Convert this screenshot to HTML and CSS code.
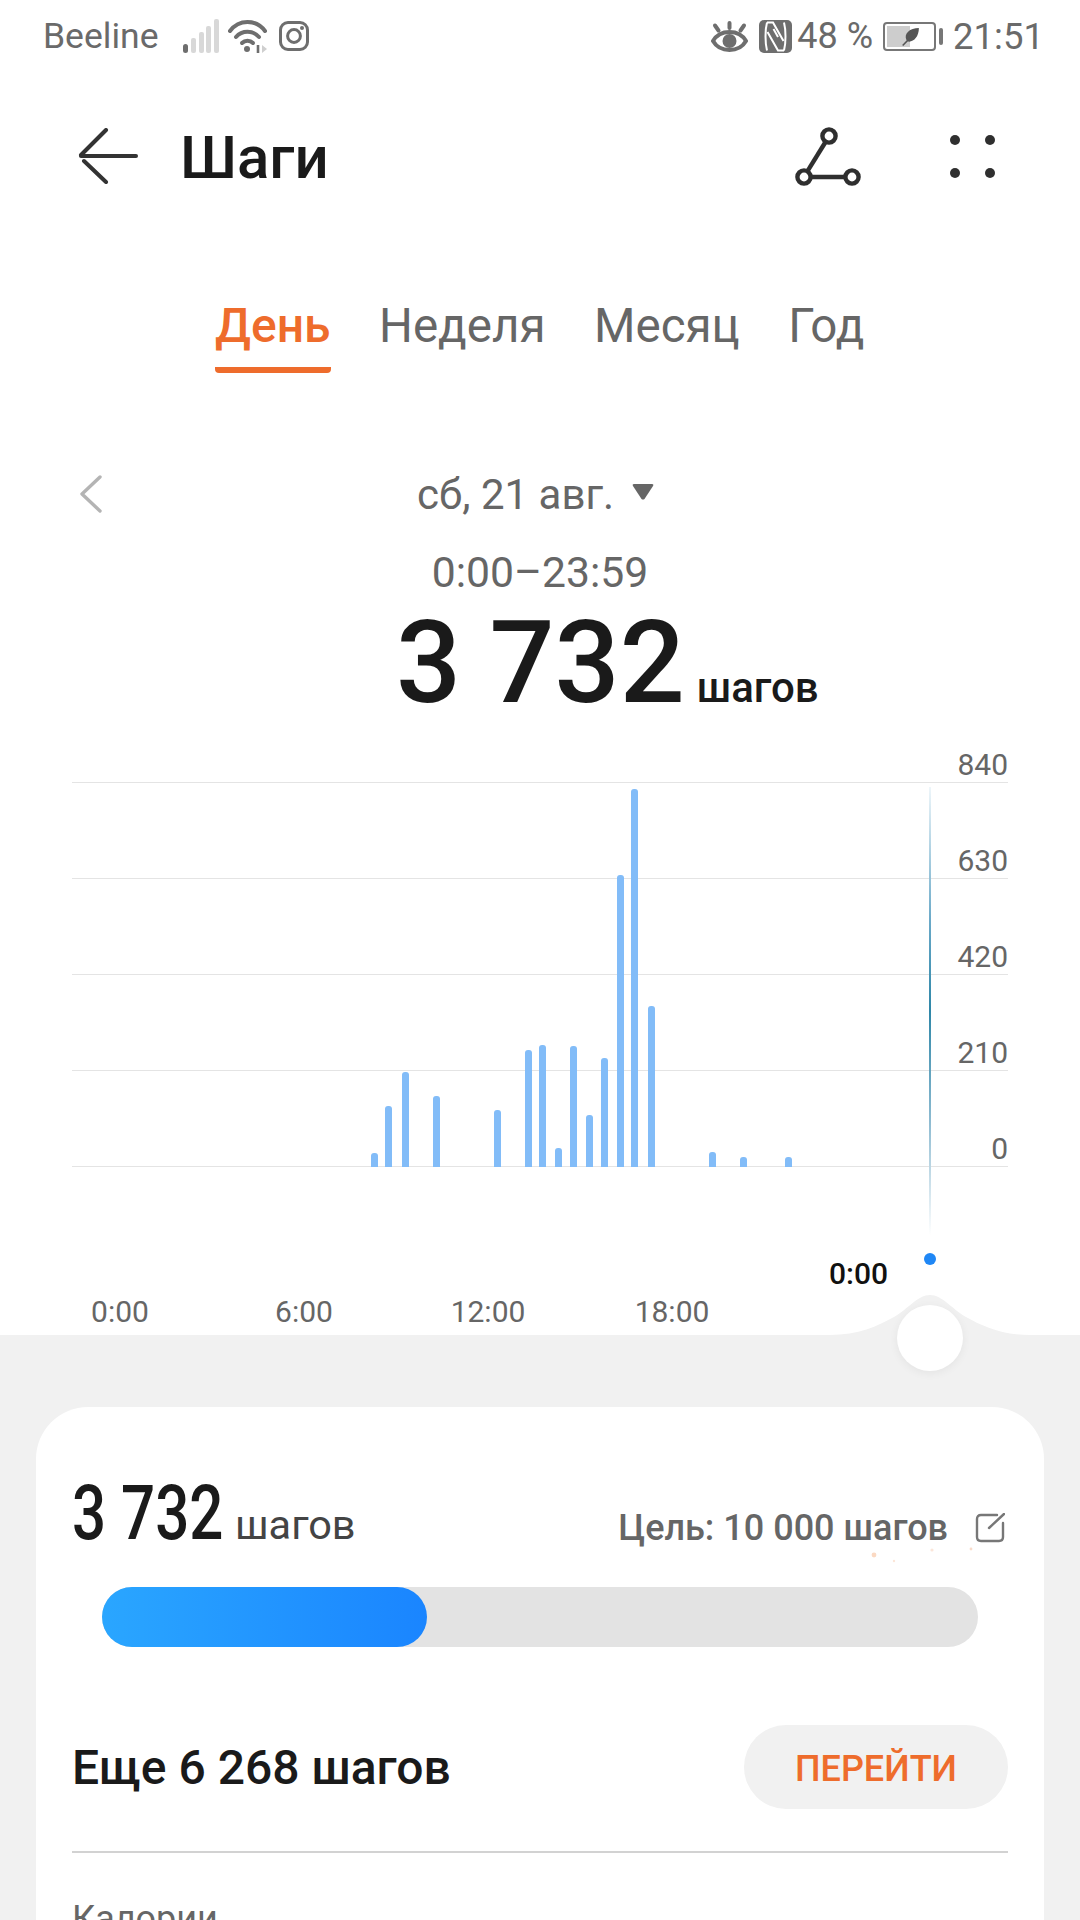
FILE: index.html
```html
<!DOCTYPE html>
<html lang="ru">
<head>
    <meta charset="UTF-8">
    <meta name="viewport" content="width=device-width, initial-scale=1.0">
    <title>Шаги</title>
    <link rel="stylesheet" href="styles.css">
</head>
<body>
    <div class="screen">
        <div class="status-bar">
            <div class="status-left">
                <span class="carrier">Beeline</span>
                <svg class="signal" width="36" height="34" viewBox="0 0 36 34">
                    <rect x="0" y="25" width="5" height="9" rx="2.5" fill="#6e6e6e"/>
                    <rect x="8" y="19" width="5" height="15" rx="2" fill="#d8d8d8"/>
                    <rect x="16" y="13" width="5" height="21" rx="2" fill="#d8d8d8"/>
                    <rect x="23" y="7" width="5" height="27" rx="2" fill="#d8d8d8"/>
                    <rect x="31" y="0" width="5" height="34" rx="2" fill="#d8d8d8"/>
                </svg>
                <svg class="wifi" width="39" height="34" viewBox="0 0 39 34" fill="none" stroke="#6e6e6e" stroke-width="4" stroke-linecap="round">
                    <path d="M2 12 C 11 0, 28 0, 37 12"/>
                    <path d="M8 18 C 14 11, 25 11, 31 18"/>
                    <path d="M14 24 C 17 21, 22 21, 25 24"/>
                    <circle cx="19" cy="30" r="3" fill="#6e6e6e" stroke="none"/>
                    <path d="M30 26 V34" stroke-width="2.6" stroke-linecap="butt"/>
                    <path d="M34 26 L39 30 L34 34 Z" fill="#cfcfcf" stroke="none"/>
                </svg>
                <svg class="insta" width="30" height="30" viewBox="0 0 30 30" fill="none" stroke="#6e6e6e" stroke-width="3">
                    <rect x="1.5" y="1.5" width="27" height="27" rx="7.5"/>
                    <circle cx="15" cy="15" r="6.4"/>
                    <circle cx="23" cy="7" r="2" fill="#6e6e6e" stroke="none"/>
                </svg>
            </div>
            <div class="status-right">
                <svg class="eye" width="37" height="31" viewBox="0 0 37 31" fill="none" stroke="#6e6e6e" stroke-width="4" stroke-linecap="round">
                    <path d="M2 20 C 9 8, 28 8, 35 20 C 28 32, 9 32, 2 20 Z"/>
                    <circle cx="18.5" cy="20" r="7" fill="#6e6e6e" stroke="none"/>
                    <path d="M18.5 2 V7 M4 4.5 L7.5 9.5 M33 4.5 L29.5 9.5"/>
                </svg>
                <svg class="nfc" width="33" height="33" viewBox="0 0 33 33" fill="none" stroke="#fff" stroke-width="2">
                    <rect width="33" height="33" rx="5" fill="#6e6e6e" stroke="none"/>
                    <path d="M8 2.5 C 6 10 6 23 8 30.5"/>
                    <path d="M25 2.5 C 27 10 27 23 25 30.5"/>
                    <path d="M8 2.5 H14 L24.5 21"/>
                    <path d="M25 30.5 H19 L8.5 12"/>
                    <path d="M14.5 9 L19 17"/>
                </svg>
                <span class="status-text percent">48 %</span>
                <div class="battery">
                    <div class="battery-body">
                        <div class="battery-fill"></div>
                        <svg class="leaf" width="19" height="19" viewBox="0 0 17 17">
                            <path d="M1 16 C 3 14 4 13 5 12 C 2 6 8 1 16 1 C 16 9 11 14 6 13 L2 17 Z" fill="#555"/>
                        </svg>
                    </div>
                    <div class="battery-nub"></div>
                </div>
                <span class="status-text clock">21:51</span>
            </div>
        </div>

        <div class="toolbar">
            <svg class="back" width="60" height="56" viewBox="0 0 60 56" fill="none" stroke="#333" stroke-width="4" stroke-linecap="round">
                <path d="M3 28 H58"/>
                <path d="M28 2 L3 27"/>
                <path d="M6 33 L28 54"/>
            </svg>
            <h1 class="title">Шаги</h1>
            <svg class="route" width="66" height="59" viewBox="0 0 66 59" fill="none" stroke="#2f2f2f" stroke-width="4.4">
                <circle cx="34" cy="9" r="6.6"/>
                <circle cx="9" cy="50" r="6.6"/>
                <circle cx="57" cy="50" r="6.6"/>
                <path d="M30.5 15 L12.5 44.2"/>
                <path d="M15.6 50 H50.4"/>
            </svg>
            <div class="dots">
                <span></span><span></span><span></span><span></span>
            </div>
        </div>

        <div class="tabs">
            <span class="tab active">День</span>
            <span class="tab">Неделя</span>
            <span class="tab">Месяц</span>
            <span class="tab">Год</span>
        </div>

        <div class="date-row">
            <svg class="chevron" width="22" height="38" viewBox="0 0 22 38" fill="none" stroke="#b4b4b4" stroke-width="3.4" stroke-linecap="round" stroke-linejoin="round">
                <path d="M20 2 L2 19 L20 36"/>
            </svg>
            <span class="date">сб, 21 авг.</span>
            <svg class="caret" width="22" height="16" viewBox="0 0 22 16">
                <path d="M2 0 H20 Q22 0 21 2 L12.5 15 Q11 16 9.5 15 L1 2 Q0 0 2 0 Z" fill="#666"/>
            </svg>
        </div>
        <div class="time-range">0:00–23:59</div>
        <div class="total">
            <span class="total-num">3 732</span>
            <span class="total-unit">шагов</span>
        </div>

        <div class="chart">
            <div class="grid">
                <div class="grid-row first"><span>840</span></div>
                <div class="grid-row"><span>630</span></div>
                <div class="grid-row"><span>420</span></div>
                <div class="grid-row"><span>210</span></div>
                <div class="grid-row"><span>0</span></div>
            </div>

            <div class="bars">
                <i style="left:371px;height:14px"></i>
                <i style="left:385px;height:61px"></i>
                <i style="left:402px;height:95px"></i>
                <i style="left:433px;height:71px"></i>
                <i style="left:494px;height:57px"></i>
                <i style="left:525px;height:117px"></i>
                <i style="left:539px;height:122px"></i>
                <i style="left:555px;height:19px"></i>
                <i style="left:570px;height:121px"></i>
                <i style="left:586px;height:52px"></i>
                <i style="left:601px;height:109px"></i>
                <i style="left:617px;height:292px"></i>
                <i style="left:631px;height:378px"></i>
                <i style="left:648px;height:161px"></i>
                <i style="left:709px;height:15px"></i>
                <i style="left:740px;height:10px"></i>
                <i style="left:785px;height:10px"></i>
            </div>

            <div class="cursor-line"></div>
            <div class="cursor-dot"></div>
            <div class="cursor-label">0:00</div>

            <div class="x-axis">
                <span>0:00</span>
                <span>6:00</span>
                <span>12:00</span>
                <span>18:00</span>
            </div>
        </div>

        <div class="sheet">
            <svg class="hump" width="200" height="41" viewBox="0 0 200 41">
                <path d="M0 41 V40 C 28 40 48 31 64 22 C 78 14 88 0 100 0 C 112 0 122 14 136 22 C 152 31 172 40 200 40 V41 Z" fill="#f1f1f1"/>
            </svg>
            <div class="thumb"></div>

            <div class="card">
                <div class="card-head">
                    <div class="steps">
                        <span class="steps-num">3 732</span>
                        <span class="steps-unit">шагов</span>
                    </div>
                    <div class="goal">
                        <span class="goal-text">Цель: 10 000 шагов</span>
                        <svg class="edit" width="30" height="30" viewBox="0 0 30 30" fill="none" stroke="#777" stroke-width="2.4" stroke-linecap="round">
                            <path d="M22 2 H6 Q2 2 2 6 V24 Q2 28 6 28 H24 Q28 28 28 24 V10"/>
                            <path d="M14 15 L29 1"/>
                        </svg>
                        <svg class="specks" width="110" height="24" viewBox="0 0 110 24">
                            <circle cx="4" cy="8" r="2.4" fill="#fbd9c2"/>
                            <circle cx="24" cy="14" r="1.2" fill="#fce6d8"/>
                            <circle cx="62" cy="3" r="1.6" fill="#fbe6da"/>
                            <circle cx="101" cy="2" r="1.4" fill="#f9dccb"/>
                        </svg>
                    </div>
                </div>

                <div class="progress">
                    <div class="progress-fill" style="width:37.1%"></div>
                </div>

                <div class="remain-row">
                    <span class="remain">Еще 6 268 шагов</span>
                    <button class="go">ПЕРЕЙТИ</button>
                </div>

                <div class="calories">Калории</div>
            </div>
        </div>
    </div>
</body>
</html>
```

FILE: styles.css
```css
* {
    box-sizing: border-box;
}

html, body {
    margin: 0;
    padding: 0;
}

body {
    font-family: Roboto, "Noto Sans", sans-serif;
    background-color: white;
}

.screen {
    width: 1080px;
    height: 1920px;
    overflow: hidden;
    display: flex;
    flex-direction: column;
}

/* status bar */
.status-bar {
    height: 72px;
    padding: 0 36px 0 43px;
    display: flex;
    justify-content: space-between;
    align-items: center;
    color: #6a6a6a;
    flex-shrink: 0;
}

.status-left, .status-right {
    display: flex;
    align-items: center;
}

.carrier {
    font-size: 35.5px;
    margin-right: 25px;
}

.wifi {
    margin-left: 9px;
}

.insta {
    margin-left: 12px;
}

.nfc {
    margin-left: 11px;
}

.status-text {
    font-size: 36px;
}

.clock {
    font-size: 36.5px;
}

.percent {
    margin-left: 5px;
}

.battery {
    display: flex;
    align-items: center;
    margin: 0 10px 0 10px;
}

.battery-body {
    width: 53px;
    height: 29px;
    border: 2px solid #777;
    border-radius: 4px;
    padding: 2px;
    position: relative;
}

.battery-fill {
    width: 23px;
    height: 100%;
    background-color: #cdcdcd;
}

.leaf {
    position: absolute;
    left: 16px;
    top: 3px;
}

.battery-nub {
    width: 4px;
    height: 17px;
    margin-left: 3px;
    background-color: #777;
    border-radius: 2px;
}

/* toolbar */
.toolbar {
    height: 84px;
    margin-top: 42px;
    padding: 0 0 0 78px;
    display: flex;
    align-items: center;
    flex-shrink: 0;
}

.title {
    margin: 2px 0 0 42px;
    font-size: 60px;
    font-weight: 500;
    color: #1a1a1a;
}

.route {
    margin-left: auto;
}

.dots {
    width: 45px;
    height: 43px;
    margin: 0 85px 0 89px;
    display: grid;
    grid-template-columns: 10px 10px;
    grid-template-rows: 10px 10px;
    justify-content: space-between;
    align-content: space-between;
}

.dots span {
    background-color: #2f2f2f;
    border-radius: 50%;
}

/* tabs */
.tabs {
    margin-top: 101px;
    padding-left: 215px;
    display: flex;
    gap: 48.5px;
    flex-shrink: 0;
}

.tab {
    font-size: 47.5px;
    line-height: 54px;
    color: #666;
    padding-bottom: 14px;
    border-bottom: 6px solid transparent;
}

.tab.active {
    font-size: 48px;
    color: #ee6c2c;
    font-weight: 500;
    border-bottom-color: #ee6c2c;
    border-radius: 0 0 4px 4px;
}

/* date and total */
.date-row {
    margin-top: 97px;
    padding-left: 80px;
    height: 48px;
    display: flex;
    align-items: center;
    flex-shrink: 0;
}

.date {
    margin-left: 315px;
    font-size: 42px;
    color: #666;
}

.caret {
    margin: 0 0 4px 18px;
}

.time-range {
    margin-top: 30px;
    text-align: center;
    font-size: 42.7px;
    line-height: 48px;
    color: #666;
    flex-shrink: 0;
}

.total {
    margin-top: 7px;
    padding-left: 396px;
    height: 120px;
    display: flex;
    align-items: baseline;
    color: #1a1a1a;
    flex-shrink: 0;
}

.total-num {
    font-size: 114.5px;
    line-height: 120px;
    font-weight: 500;
}

.total-unit {
    margin-left: 12px;
    font-size: 42px;
    font-weight: 500;
}

/* chart */
.chart {
    position: relative;
    height: 601px;
    margin-top: 11px;
    flex-shrink: 0;
}

.grid {
    padding: 0 72px;
}

.grid-row {
    height: 96px;
    display: flex;
    justify-content: flex-end;
    align-items: flex-end;
    border-bottom: 1px solid #e4e4e4;
    font-size: 30px;
    line-height: 34px;
    color: #666;
}

.grid-row.first {
    height: 49px;
}

.bars {
    position: absolute;
    left: 0;
    top: 0;
    width: 100%;
    height: 433px;
}

.bars i {
    position: absolute;
    bottom: 0;
    width: 7px;
    background-color: #82bcf8;
    border-radius: 3px 3px 0 0;
}

.cursor-line {
    position: absolute;
    left: 929px;
    top: 53px;
    width: 2px;
    height: 448px;
    background: linear-gradient(to bottom, #eef6fa 0%, #6aa9c8 30%, #2f87a8 50%, #8fbcd2 75%, #ffffff 100%);
}

.cursor-dot {
    position: absolute;
    left: 924px;
    top: 519px;
    width: 12px;
    height: 12px;
    border-radius: 50%;
    background-color: #1f87f5;
}

.cursor-label {
    position: absolute;
    left: 829px;
    top: 523px;
    font-size: 30px;
    line-height: 34px;
    font-weight: 500;
    color: #111;
}

.x-axis {
    position: absolute;
    left: 28px;
    top: 561px;
    display: flex;
}

.x-axis span {
    width: 184px;
    text-align: center;
    font-size: 30px;
    line-height: 34px;
    color: #666;
}

/* lower sheet */
.sheet {
    position: relative;
    flex: 1;
    background-color: #f1f1f1;
    padding: 72px 36px 0;
}

.hump {
    position: absolute;
    left: 830px;
    top: -40px;
}

.thumb {
    position: absolute;
    left: 897px;
    top: -30px;
    width: 66px;
    height: 66px;
    border-radius: 50%;
    background-color: white;
    box-shadow: 0 2px 10px rgba(0, 0, 0, 0.06);
}

.card {
    height: 600px;
    background-color: white;
    border-radius: 52px;
    padding: 0 36px;
}

.card-head {
    height: 180px;
    padding-top: 68px;
    display: flex;
    justify-content: space-between;
    align-items: flex-start;
}

.steps {
    display: flex;
    align-items: baseline;
    color: #1a1a1a;
}

.steps-num {
    width: 163px;
    font-size: 76px;
    line-height: 76px;
    font-weight: 500;
    white-space: nowrap;
    transform: scaleX(0.79);
    transform-origin: left center;
}

.steps-unit {
    font-size: 41.5px;
    color: #444;
}

.goal {
    position: relative;
    display: flex;
    align-items: center;
    margin-top: 32px;
}

.goal-text {
    font-size: 36px;
    font-weight: 500;
    color: #666;
}

.edit {
    margin-left: 27px;
    margin-right: 3px;
}

.specks {
    position: absolute;
    right: 28px;
    top: 40px;
}

.progress {
    margin: 0 30px;
    height: 60px;
    background-color: #e3e3e3;
    border-radius: 30px;
}

.progress-fill {
    height: 100%;
    border-radius: 30px;
    background: linear-gradient(to right, #2aa6ff, #1a85ff);
}

.remain-row {
    margin-top: 78px;
    padding-bottom: 42px;
    display: flex;
    justify-content: space-between;
    align-items: center;
    border-bottom: 2px solid #d2d2d2;
}

.remain {
    font-size: 48px;
    font-weight: 500;
    color: #1a1a1a;
}

.go {
    width: 264px;
    height: 84px;
    padding: 3px 0 0;
    border: none;
    border-radius: 42px;
    background-color: #f1f1f1;
    color: #ee6c2c;
    font-family: inherit;
    font-size: 36px;
    font-weight: 500;
}

.calories {
    margin-top: 45px;
    font-size: 36px;
    color: #666;
}
```
